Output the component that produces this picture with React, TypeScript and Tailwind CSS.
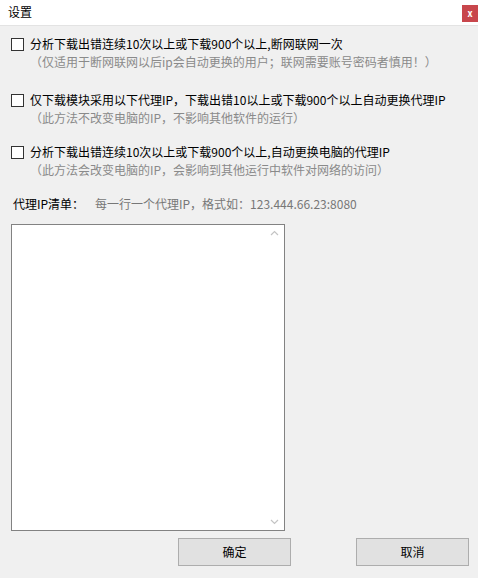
import React from "react"

const font = { fontFamily: '"SimSun", "Noto Sans CJK SC", sans-serif' }

function Check({ label, note }: { label: string; note: string }) {
  return (
    <div className="flex flex-col">
      <label className="flex items-center h-[18px]">
        <span className="w-[13px] h-[13px] ml-[11px] mr-[6px] border border-[#333] bg-white shrink-0" />
        <span className="text-[12px] text-black leading-[18px] whitespace-nowrap">{label}</span>
      </label>
      <div className="h-[18px] pl-[30px] text-[12px] leading-[18px] text-[#8a8a8a] whitespace-nowrap">{note}</div>
    </div>
  )
}

export default function App() {
  return (
    <div className="w-[478px] h-[578px] bg-[#f0f0f0] flex flex-col overflow-hidden" style={font}>
      {/* Title bar */}
      <div className="h-[26px] bg-white border-b border-[#e3e3e3] flex items-start justify-between shrink-0">
        <span className="text-[12px] leading-[12px] text-black ml-[8px] mt-[6px]">设置</span>
        <button className="w-[16px] h-[17px] mt-[5px] bg-[#c8464c] text-white text-[9px] font-bold leading-[17px] flex items-center justify-center">x</button>
      </div>

      <div className="flex flex-col pt-[9px]">
        <Check
          label="分析下载出错连续10次以上或下载900个以上,断网联网一次"
          note="（仅适用于断网联网以后ip会自动更换的用户；联网需要账号密码者慎用！）"
        />
        <div className="h-[20px]" />
        <Check
          label="仅下载模块采用以下代理IP，下载出错10以上或下载900个以上自动更换代理IP"
          note="（此方法不改变电脑的IP，不影响其他软件的运行）"
        />
        <div className="h-[16px]" />
        <Check
          label="分析下载出错连续10次以上或下载900个以上,自动更换电脑的代理IP"
          note="（此方法会改变电脑的IP，会影响到其他运行中软件对网络的访问）"
        />

        <div className="flex items-center h-[18px] mt-[16px] pl-[13px] text-[12px] whitespace-nowrap">
          <span className="text-black w-[82px]">代理IP清单：</span>
          <span className="text-[#777]">每一行一个代理IP，格式如：123.444.66.23:8080</span>
        </div>

        {/* List box */}
        <div className="ml-[11px] mt-[11px] w-[274px] h-[307px] bg-white border border-[#828282] flex justify-end">
          <div className="w-[17px] flex flex-col justify-between items-center py-[5px] mr-[1px]">
            <svg width="9" height="6" viewBox="0 0 9 6"><path d="M1 5 L4.5 1.5 L8 5" fill="none" stroke="#c4c4c4" strokeWidth="1.2" /></svg>
            <svg width="9" height="6" viewBox="0 0 9 6"><path d="M1 1 L4.5 4.5 L8 1" fill="none" stroke="#c4c4c4" strokeWidth="1.2" /></svg>
          </div>
        </div>

        <div className="flex mt-[7px]">
          <button className="ml-[178px] w-[113px] h-[28px] bg-[#e1e1e1] border border-[#adadad] text-[12px] text-black">确定</button>
          <button className="ml-[65px] w-[113px] h-[28px] bg-[#e1e1e1] border border-[#adadad] text-[12px] text-black">取消</button>
        </div>
      </div>
    </div>
  )
}
